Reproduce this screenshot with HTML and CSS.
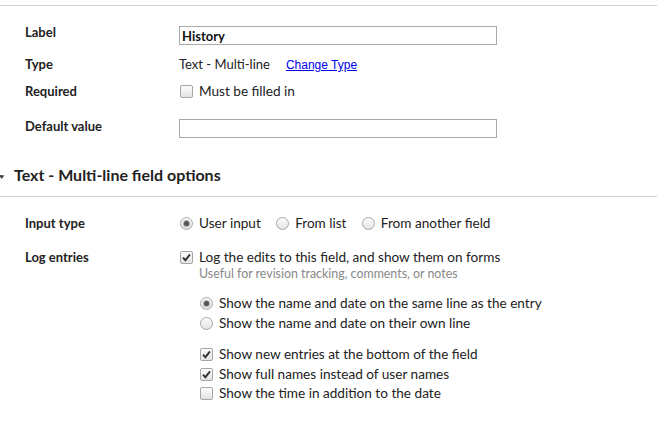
FILE: index.html
```html
<!DOCTYPE html>
<html>
<head>
<meta charset="utf-8">
<link rel="stylesheet" href="styles.css">
</head>
<body>
<div class="page">
  <div class="rule"></div>
  <div class="section first">
    <div class="row r1">
      <div class="lbl">Label</div>
      <div class="val"><input class="text-input bold" type="text" value="History"></div>
    </div>
    <div class="row r2">
      <div class="lbl">Type</div>
      <div class="val"><span class="type-name">Text - Multi-line</span><a class="link" href="#">Change Type</a></div>
    </div>
    <div class="row r3">
      <div class="lbl">Required</div>
      <div class="val"><span class="opt"><span class="cb"></span>Must be filled in</span></div>
    </div>
    <div class="row r4">
      <div class="lbl">Default value</div>
      <div class="val"><input class="text-input" type="text" value=""></div>
    </div>
  </div>
  <div class="heading">
    <svg class="caret" width="14" height="20" viewBox="0 0 14 20"><polygon points="-1,10 4.5,10.5 1.5,14" fill="#444"/></svg>
    <span>Text - Multi-line field options</span>
  </div>
  <div class="rule r-second"></div>
  <div class="section second">
    <div class="row">
      <div class="lbl">Input type</div>
      <div class="val">
        <span class="opt inline o1"><span class="rb on"></span>User input</span>
        <span class="opt inline o2"><span class="rb"></span>From list</span>
        <span class="opt inline"><span class="rb"></span>From another field</span>
      </div>
    </div>
    <div class="row r-log">
      <div class="lbl">Log entries</div>
      <div class="val">
        <div class="opt"><span class="cb on"><svg width="13" height="13" viewBox="0 0 13 13"><path d="M3 6.6 L5.4 9.2 L10 3.4" fill="none" stroke="#333" stroke-width="1.9"/></svg></span>Log the edits to this field, and show them on forms</div>
        <div class="hint">Useful for revision tracking, comments, or notes</div>
        <div class="sub radios">
          <div class="opt"><span class="rb on"></span>Show the name and date on the same line as the entry</div>
          <div class="opt"><span class="rb"></span>Show the name and date on their own line</div>
        </div>
        <div class="sub checks">
          <div class="opt"><span class="cb on"><svg width="13" height="13" viewBox="0 0 13 13"><path d="M3 6.6 L5.4 9.2 L10 3.4" fill="none" stroke="#333" stroke-width="1.9"/></svg></span>Show new entries at the bottom of the field</div>
          <div class="opt"><span class="cb on"><svg width="13" height="13" viewBox="0 0 13 13"><path d="M3 6.6 L5.4 9.2 L10 3.4" fill="none" stroke="#333" stroke-width="1.9"/></svg></span>Show full names instead of user names</div>
          <div class="opt"><span class="cb"></span>Show the time in addition to the date</div>
        </div>
      </div>
    </div>
  </div>
</div>
</body>
</html>
```
FILE: styles.css
```css
html, body {
  margin: 0;
  padding: 0;
  background: #fff;
}
body {
  font-family: Lato, "Open Sans", sans-serif;
  font-size: 13px;
  color: #222;
}
.page {
  width: 657px;
  height: 431px;
  overflow: hidden;
}
.rule {
  margin-top: 5px;
  border-top: 1px solid #cfcfcf;
}
.r-second {
  margin-top: 11px;
}
.section {
  padding-top: 16px;
}
.row {
  display: flex;
  align-items: flex-start;
  line-height: 20px;
}
.lbl {
  width: 154px;
  padding-left: 25px;
  font-weight: 700;
  flex: none;
}
.val {
  flex: 1;
}
.r2 { margin-top: 9px; }
.r3 { margin-top: 6px; }
.r4 { margin-top: 15px; }
.r1 .val { padding-top: 4px; }
.r4 .val { padding-top: 3px; }
.text-input {
  display: block;
  box-sizing: border-box;
  width: 318px;
  height: 19px;
  margin: 0;
  padding: 0 2px;
  border: 1px solid #a9a9a9;
  border-radius: 0;
  font-family: Lato, sans-serif;
  font-size: 13px;
  color: #111;
  background: #fff;
  outline: none;
}
.text-input.bold {
  font-weight: 700;
}
.type-name {
  margin-right: 16px;
}
.link {
  font-family: "Liberation Sans", Arial, sans-serif;
  font-size: 12px;
  color: #0000ee;
  text-decoration: underline;
}
.heading {
  margin-top: 27px;
  display: flex;
  align-items: flex-start;
  font-size: 16px;
  font-weight: 700;
  line-height: 20px;
  color: #222;
}
.caret {
  flex: none;
  display: block;
}
.opt {
  display: block;
  white-space: nowrap;
  font-size: 13.6px;
}
.opt.inline {
  display: inline-block;
}
.o1 { margin-right: 11px; }
.o2 { margin-right: 11px; }
.cb, .rb {
  display: inline-block;
  box-sizing: border-box;
  width: 13px;
  height: 13px;
  margin-left: 1px;
  margin-right: 6px;
  vertical-align: -2px;
  border: 1px solid #a6a6a6;
  background: linear-gradient(#fcfcfc, #e4e4e4);
  position: relative;
}
.cb {
  border-radius: 2px;
}
.cb svg {
  position: absolute;
  left: -1px;
  top: -1px;
}
.rb {
  border-radius: 50%;
}
.rb.on::after {
  content: "";
  position: absolute;
  left: 3px;
  top: 3px;
  width: 5px;
  height: 5px;
  border-radius: 50%;
  background: #555;
  box-shadow: 0 0 1px 1px #aaa;
}
.r-log {
  margin-top: 14px;
}
.hint {
  font-size: 12.4px;
  line-height: 14px;
  color: #888;
  padding-left: 20px;
}
.sub {
  padding-left: 20px;
}
.radios {
  margin-top: 12px;
}
.checks {
  margin-top: 12px;
  line-height: 19.5px;
}
```
